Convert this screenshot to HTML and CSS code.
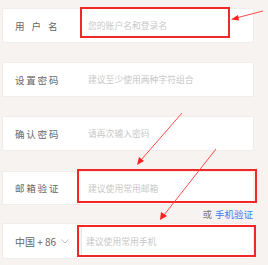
FILE: index.html
```html
<!DOCTYPE html>
<html>
<head>
<meta charset="utf-8">
<link rel="stylesheet" href="styles.css">
</head>
<body>
<div class="form">
  <div class="row r1">
    <div class="label wide">用户名</div>
    <div class="field">您的账户名和登录名</div>
  </div>
  <div class="row r2">
    <div class="label">设置密码</div>
    <div class="field">建议至少使用两种字符组合</div>
  </div>
  <div class="row r3">
    <div class="label">确认密码</div>
    <div class="field">请再次输入密码</div>
  </div>
  <div class="row r4">
    <div class="label">邮箱验证</div>
    <div class="field">建议使用常用邮箱</div>
  </div>
  <div class="alt"><span class="or">或</span><span class="link">手机验证</span></div>
  <div class="row r5">
    <div class="country">中国 + 86 <svg class="chev" width="8" height="5" viewBox="0 0 8 5"><path d="M0.5 0.5 L4 4 L7.5 0.5" fill="none" stroke="#b5b5b5" stroke-width="0.9"/></svg></div>
    <div class="field divided">建议使用常用手机</div>
  </div>
</div>

<div class="mark m1"></div>
<div class="mark m4"></div>
<div class="mark m5"></div>

<svg class="arrows" width="268" height="265" viewBox="0 0 268 265">
  <g stroke="#ff4a4a" stroke-width="1" fill="none">
    <line x1="263" y1="11" x2="236" y2="18"/>
    <line x1="182" y1="113" x2="141" y2="160"/>
    <line x1="216" y1="149" x2="164" y2="215"/>
  </g>
  <g fill="#ff2020">
    <polygon points="231,19.5 238,15 239,20.5"/>
    <polygon points="137,165 139,157 144,161"/>
    <polygon points="160,220 161,212 167,216"/>
  </g>
</svg>
</body>
</html>
```
FILE: styles.css
```css
html, body {
  margin: 0;
  padding: 0;
  background: #f7f3f0;
  width: 268px;
  height: 265px;
  overflow: hidden;
  font-family: "Noto Sans CJK SC", "Noto Sans", sans-serif;
}
.form {
  display: flex;
  flex-direction: column;
  padding: 9px 0 0 3px;
  width: 250px;
}
.row {
  display: flex;
  align-items: center;
  height: 33px;
  background: #fff;
  box-shadow: 0 0 0 0.5px #ede8e4;
}
.r2, .r3 { margin-top: 21px; }
.r4 { margin-top: 22px; height: 32px; }
.r5 { height: 34px; }
.label {
  width: 70px;
  padding-left: 12px;
  font-size: 9.5px;
  color: #666;
  letter-spacing: 1.8px;
  white-space: nowrap;
}
.label.wide { letter-spacing: 7px; }
.field {
  flex: 1;
  padding-left: 3px;
  font-size: 8.8px;
  color: #c8c8c8;
  white-space: nowrap;
  align-self: stretch;
  display: flex;
  align-items: center;
}
.country {
  width: 66px;
  padding-left: 12px;
  font-size: 10px;
  color: #666;
  white-space: nowrap;
  display: flex;
  align-items: center;
  gap: 4px;
}
.chev { margin-left: 1px; }
.field.divided {
  border-left: 1px solid #e6e6e6;
  margin: 3px 0;
  padding-left: 4px;
}
.alt {
  height: 20px;
  display: flex;
  align-items: center;
  justify-content: flex-end;
  font-size: 9.5px;
  gap: 3px;
}
.or { color: #777; }
.link { color: #3b7cf5; }
.mark {
  position: absolute;
  border: 2px solid #f02828;
  box-sizing: border-box;
}
.m1 { left: 80px; top: 7px; width: 150px; height: 31px; }
.m4 { left: 77px; top: 169px; width: 180px; height: 34px; }
.m5 { left: 77px; top: 225px; width: 179px; height: 32px; }
.arrows {
  position: absolute;
  left: 0;
  top: 0;
  pointer-events: none;
}
```
